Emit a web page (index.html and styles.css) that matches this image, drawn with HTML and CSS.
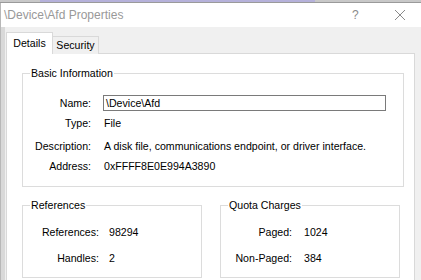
FILE: index.html
```html
<!DOCTYPE html>
<html lang="en">
<head>
  <meta charset="UTF-8">
  <title>\Device\Afd Properties</title>
  <link rel="stylesheet" href="styles.css">
</head>
<body>
  <!-- strip of the window behind -->
  <div class="backdrop"><div class="backdrop-tab"></div></div>

  <div class="window">
    <div class="titlebar">
      <span class="title">\Device\Afd Properties</span>
      <span class="help">?</span>
      <svg class="close" width="12" height="12" viewBox="0 0 12 12">
        <path d="M1 1 L11 11 M11 1 L1 11" stroke="#8a8a8a" stroke-width="1" fill="none"/>
      </svg>
    </div>

    <div class="body">
      <div class="tabs">
        <div class="tab active">Details</div>
        <div class="tab">Security</div>
      </div>

      <div class="panel">
        <fieldset class="group basic">
          <legend>Basic Information</legend>
          <div class="rows basic-rows">
            <span class="label">Name:</span>
            <span class="value"><span class="textbox">\Device\Afd</span></span>
            <span class="label">Type:</span>
            <span class="value">File</span>
            <span class="label">Description:</span>
            <span class="value">A disk file, communications endpoint, or driver interface.</span>
            <span class="label">Address:</span>
            <span class="value">0xFFFF8E0E994A3890</span>
          </div>
        </fieldset>

        <div class="pair">
          <fieldset class="group">
            <legend>References</legend>
            <div class="rows small-rows refs">
              <span class="label">References:</span>
              <span class="value">98294</span>
              <span class="label">Handles:</span>
              <span class="value">2</span>
            </div>
          </fieldset>
          <fieldset class="group">
            <legend>Quota Charges</legend>
            <div class="rows small-rows quota">
              <span class="label">Paged:</span>
              <span class="value">1024</span>
              <span class="label">Non-Paged:</span>
              <span class="value">384</span>
            </div>
          </fieldset>
        </div>
      </div>
    </div>
  </div>
</body>
</html>
```

FILE: styles.css
```css
html, body {
  margin: 0;
  padding: 0;
  background-color: #f0f0f0;
  overflow: hidden;
}

body {
  width: 421px;
  height: 280px;
  font-family: "Liberation Sans", Arial, sans-serif;
  font-size: 10.6px;
  color: #000;
}

/* Window behind the dialog */
.backdrop {
  height: 2px;
  background: #c8c8c8;
  border-bottom: 1px solid #9a9a9a;
}

.backdrop-tab {
  margin-left: 40px;
  width: 275px;
  height: 2px;
  background: #b5b1da;
}

.window {
  border-left: 1px solid #b8b8b8;
  height: 277px;
  overflow: hidden;
}

/* Title bar */
.titlebar {
  height: 24px;
  background: #fff;
  display: flex;
  align-items: center;
  padding-left: 3px;
}

.title {
  color: #999;
  font-size: 12px;
  flex: 1;
}

.help {
  color: #8a8a8a;
  font-size: 12px;
  width: 42px;
}

.close {
  margin-right: 15px;
}

/* Dialog body */
.body {
  height: 246px;
  overflow: hidden;
  padding: 7px 6px 0 1px;
  border-left: 5px solid #d9d9d9;
  margin-left: -1px;
}

.tabs {
  display: flex;
  align-items: flex-end;
  height: 20px;
  position: relative;
  z-index: 1;
  margin-bottom: -1px;
}

.tab {
  height: 17px;
  padding: 0 3px;
  width: 39px;
  text-align: center;
  line-height: 16px;
  border: 1px solid #d9d9d9;
  border-bottom: none;
  background: #f0f0f0;
}

.tab.active {
  height: 21px;
  background: #fff;
  line-height: 20px;
  margin-right: -1px;
}

.panel {
  background: #fff;
  border: 1px solid #d9d9d9;
  height: 240px;
  padding: 12px 10px 0 15px;
}

/* Group boxes */
.group {
  margin: 0;
  padding: 0;
  border: 1px solid #dcdcdc;
  min-width: 0;
}

.group legend {
  padding: 0 1px;
  margin-left: 7px;
  line-height: 14px;
}

.rows {
  display: grid;
  align-items: center;
}

.label {
  text-align: right;
}

.basic-rows {
  grid-template-columns: 68px 282px;
  grid-template-rows: 16px 24px 22px 18px;
  column-gap: 13px;
  padding: 15px 0 11px 0;
}

.textbox {
  display: block;
  height: 14px;
  line-height: 14px;
  border: 1px solid #7a7a7a;
  padding-left: 2px;
  margin-left: -1px;
}

.pair {
  display: grid;
  grid-template-columns: 180px 180px;
  column-gap: 18px;
  margin-top: 11px;
}

.small-rows {
  grid-template-rows: 20px 20px;
  row-gap: 6px;
  padding: 10px 0 9px 0;
}

.refs {
  grid-template-columns: 76px 1fr;
  column-gap: 10px;
}

.quota {
  grid-template-columns: 71px 1fr;
  column-gap: 12px;
}
```
